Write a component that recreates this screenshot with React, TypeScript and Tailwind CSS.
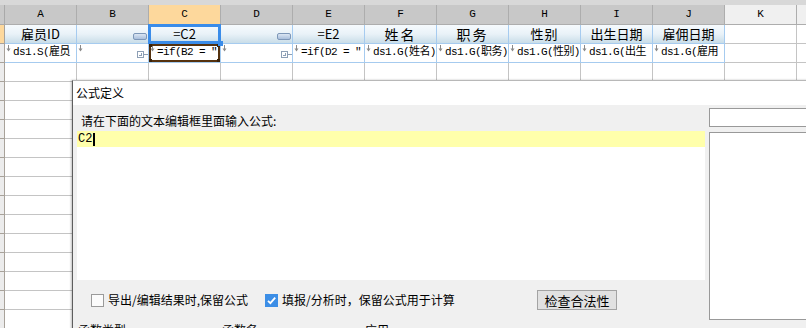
import React from 'react'

const cols = ['A', 'B', 'C', 'D', 'E', 'F', 'G', 'H', 'I', 'J', 'K', 'L']

type Cell = { text: string; size?: string }

const row1: Cell[] = [
  { text: '雇员ID', size: 'text-[13px]' },
  { text: '' },
  { text: '=C2', size: 'text-[13px]' },
  { text: '' },
  { text: '=E2', size: 'text-[13px]' },
  { text: '姓名', size: 'text-[14px] tracking-[2px]' },
  { text: '职务', size: 'text-[14px] tracking-[2px]' },
  { text: '性别', size: 'text-[13px] tracking-[1px]' },
  { text: '出生日期', size: 'text-[13px]' },
  { text: '雇佣日期', size: 'text-[13px]' },
]

const row2 = [
  'ds1.S(雇员',
  '',
  '=if(B2 = "',
  '',
  '=if(D2 = "',
  'ds1.G(姓名)',
  'ds1.G(职务)',
  'ds1.G(性别)',
  'ds1.G(出生',
  'ds1.G(雇用',
]

function ExpandMark() {
  return (
    <svg className="absolute left-[1px] top-[1px]" width="5" height="7" viewBox="0 0 5 7">
      <path d="M2.5 0V5" stroke="#8a8a8a" strokeWidth="1" />
      <path d="M0.5 3.5L2.5 6.5L4.5 3.5Z" fill="#8a8a8a" />
    </svg>
  )
}

function ButtonWidget() {
  return (
    <div className="absolute right-[1px] top-[8px] w-[14px] h-[7px] rounded-[2px] border border-[#7d97b8] bg-linear-to-b from-[#dbe6f3] to-[#a9bfdc]" />
  )
}

function CheckWidget() {
  return (
    <div className="absolute right-0 top-[7px] flex items-center">
      <div className="w-[7px] h-[7px] border border-[#8d9fb5] bg-white flex items-center justify-center">
        <div className="w-[3px] h-[3px] border-r border-b border-[#8d9fb5]" />
      </div>
      <div className="w-[4px] h-px bg-[#8d9fb5]" />
    </div>
  )
}

export default function App() {
  const rows = Array.from({ length: 17 }, (_, i) => i + 1)

  return (
    <div className="relative w-[806px] h-[328px] overflow-hidden bg-white font-['Liberation_Sans','Noto_Sans_CJK_SC',sans-serif] text-black">
      {/* top strip */}
      <div className="h-[5px] bg-[#d8d8d8]" />

      {/* column headers */}
      <div className="flex h-[20px]">
        <div className="w-[5px] shrink-0 bg-[#c9c9c9] border-r border-b border-[#a9a9a9]" />
        {cols.map((c, i) => (
          <div
            key={c}
            className={`w-[72px] shrink-0 border-r border-b border-[#adadad] flex items-center justify-center font-['Liberation_Mono',monospace] text-[11px] ${
              i === 2 ? 'bg-[#fdd89c]' : i >= 10 ? 'bg-[#f0f0f0]' : 'bg-[#c8c8c8]'
            }`}
          >
            {c}
          </div>
        ))}
      </div>

      {/* rows */}
      {rows.map((r) => (
        <div key={r} className="flex h-[19px]">
          <div
            className={`w-[5px] shrink-0 border-r border-b border-[#a8a29a] ${
              r === 1 ? 'bg-[#fdd89c]' : 'bg-[#ececec]'
            }`}
          />
          {cols.map((c, i) => {
            const used = i < 10 && r <= 2
            const border = used ? 'border-[#a6cbef]' : 'border-[#c4c4c4]'
            if (r === 1 && i < 10) {
              const cell = row1[i]
              return (
                <div
                  key={c}
                  className={`relative w-[72px] shrink-0 border-r border-b ${border} bg-linear-to-b from-[#f6fafd] via-[#e9f2f8] to-[#c9dde8] flex items-center justify-center font-['Noto_Sans_CJK_SC',sans-serif] ${cell.size ?? 'text-[13px]'}`}
                >
                  {cell.text}
                  {(i === 1 || i === 3) && <ButtonWidget />}
                  {i === 2 && (
                    <>
                      <div className="absolute -left-[1px] -top-[1px] -right-[1px] -bottom-[1px] z-10 border-[3px] border-[#3a8ce9]" />
                      <div className="absolute -right-[3px] -bottom-[3px] z-20 w-[5px] h-[5px] bg-[#3a8ce9]" />
                    </>
                  )}
                </div>
              )
            }
            if (r === 2 && i < 10) {
              return (
                <div
                  key={c}
                  className={`relative w-[72px] shrink-0 border-r border-b ${border} bg-white overflow-hidden pl-[8px] pt-[1px] font-['Liberation_Mono','Noto_Sans_CJK_SC',monospace] text-[11px] leading-[15px] tracking-[-0.6px] whitespace-nowrap`}
                >
                  <ExpandMark />
                  {row2[i]}
                  {(i === 1 || i === 3) && <CheckWidget />}
                  {i === 2 && (
                    <div className="absolute inset-0 border-2 border-[#55320f]">
                      <div className="absolute -left-[2px] -top-[2px] w-[3px] h-[3px] bg-[#3a220a]" />
                      <div className="absolute -right-[2px] -top-[2px] w-[3px] h-[3px] bg-[#3a220a]" />
                      <div className="absolute -left-[2px] -bottom-[2px] w-[3px] h-[3px] bg-[#3a220a]" />
                      <div className="absolute -right-[2px] -bottom-[2px] w-[3px] h-[3px] bg-[#3a220a]" />
                    </div>
                  )}
                </div>
              )
            }
            return <div key={c} className={`w-[72px] shrink-0 border-r border-b ${border} bg-white`} />
          })}
        </div>
      ))}

      {/* 公式定义 dialog */}
      <div className="absolute left-[72px] top-[80px] w-[760px] h-[260px] z-30 flex flex-col border-l border-t border-l-[#5e5e5e] border-t-[#b8b8b8] shadow-[-1px_0_2px_rgba(0,0,0,0.25)]">
        <div className="h-[24px] bg-white flex items-center pl-[3px] text-[12px] font-['Noto_Sans_CJK_SC',sans-serif]">
          公式定义
        </div>
        <div className="flex-1 bg-[#f0f0f0] flex pl-[4px] font-['Noto_Sans_CJK_SC',sans-serif] text-[12px]">
          {/* left */}
          <div className="w-[628px] shrink-0 flex flex-col">
            <div className="h-[26px] flex items-center pl-[4px] pt-[5px]">请在下面的文本编辑框里面输入公式:</div>
            <div className="h-[16px] bg-[#ffffab] flex items-center pl-[1px] font-['Liberation_Mono',monospace] text-[12px]">
              C2<span className="w-[2px] h-[13px] bg-black ml-px" />
            </div>
            <div className="h-[133px] bg-white" />
            <div className="flex items-center h-[20px] mt-[10px] pl-[14px]">
              <div className="w-[174px] flex items-center gap-[4px]">
                <span className="w-[13px] h-[13px] border border-[#9a9a9a] bg-[#fbfbfb]" />
                <span>导出/编辑结果时,保留公式</span>
              </div>
              <div className="w-[272px] flex items-center gap-[4px]">
                <span className="w-[13px] h-[13px] bg-[#3c8ee6] flex items-center justify-center">
                  <svg width="11" height="11" viewBox="0 0 11 11">
                    <path d="M2 5.8L4.4 8.2L9.2 2.6" stroke="white" strokeWidth="1.8" fill="none" />
                  </svg>
                </span>
                <span>填报/分析时，保留公式用于计算</span>
              </div>
              <button className="w-[80px] h-[20px] border border-[#a3a3a3] bg-[#e1e1e1] text-[13px] leading-none">
                检查合法性
              </button>
            </div>
            <div className="flex mt-[12px] pl-[1px] text-[12px] leading-[16px]">
              <span className="w-[144px]">函数类型</span>
              <span className="w-[143px]">函数名</span>
              <span>应用</span>
            </div>
          </div>
          {/* right */}
          <div className="ml-[4px] flex-1 flex flex-col">
            <div className="mt-[3px] h-[19px] border border-[#999] bg-white" />
            <div className="mt-[5px] h-[188px] border border-[#999] bg-white" />
          </div>
        </div>
      </div>
    </div>
  )
}
